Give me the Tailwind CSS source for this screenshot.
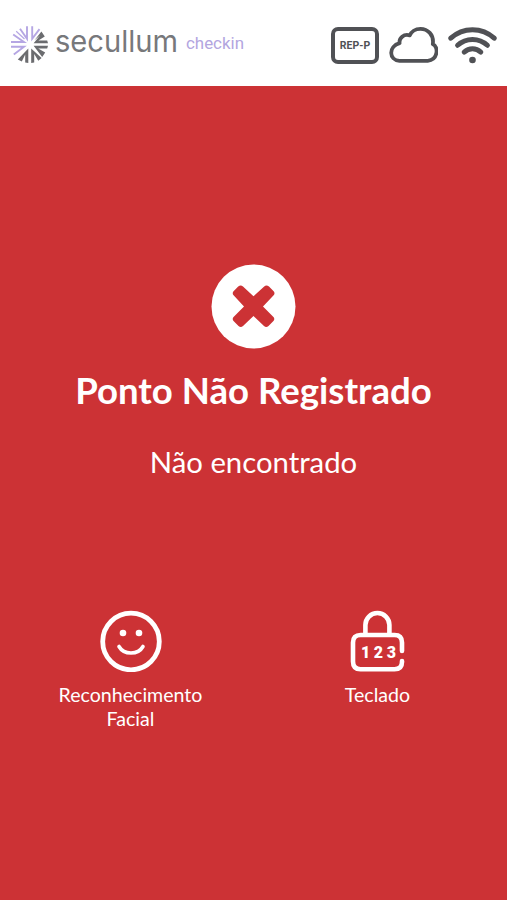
<!DOCTYPE html>
<html lang="pt-BR">
<head>
  <meta charset="UTF-8" />
  <meta name="viewport" content="width=device-width, initial-scale=1.0" />
  <title>Secullum Checkin</title>
  <script src="https://cdn.jsdelivr.net/npm/@tailwindcss/browser@4"></script>
</head>
<body class="h-screen flex flex-col overflow-hidden bg-[#cc3235] text-white font-['Lato',sans-serif]">
  <!-- Cabeçalho -->
  <header class="h-[86px] shrink-0 bg-white flex items-start justify-between pl-[10px] pr-[10px]">
    <div class="flex pt-5">
      <svg class="w-[39px] h-[39px] mt-[5px]" viewBox="0 0 39 39" fill="none" stroke-width="1.9">
        <g stroke="#b5a6e3">
          <path d="M22.2 1.3V13.8L29.5 4.2" />
          <path d="M17 1.3V13.8L10 3.8" />
          <path d="M6.2 6.2L14.5 14" stroke-width="1.2" />
          <path d="M1 17H14L3.2 9.5" />
          <path d="M1 21.8H14L3.8 29.5" />
        </g>
        <g fill="#6b6c6f">
          <path d="M31.4 6.5L34.8 11.4L28.4 15.4H37.2L38 18.2H23.6L30 10.5L24.5 15.2Z" />
          <path d="M23.6 20.8H38L37.2 23.6H28.2L35.2 27.6L32.2 32Z" />
          <path d="M21.2 23.4V38L24.2 37.4V29L28.3 35.8L31.6 33Z" />
          <path d="M18.3 23.4V38L15.2 37.6V29.5L11.8 36.6L7.8 34.4Z" />
        </g>
      </svg>
      <svg class="w-[200px] h-11 overflow-visible" viewBox="0 0 200 44">
        <text x="6" y="32" font-family="Inter" font-size="30" textLength="123" lengthAdjust="spacingAndGlyphs" fill="#77787b">secullum</text>
        <text x="137" y="29" font-family="Roboto" font-size="17" textLength="58" lengthAdjust="spacingAndGlyphs" fill="#b3a5df">checkin</text>
      </svg>
    </div>
    <div class="flex gap-[10px] pt-[26px]">
      <div class="w-12 h-[37px] mt-px border-4 border-[#505155] rounded-[7px] flex items-center justify-center font-[Roboto] font-bold text-[10.5px] text-[#505155]">REP-P</div>
      <svg class="w-[49px] h-[38px]" viewBox="0 0 49 38" fill="none" stroke="#505155" stroke-width="3.8" stroke-linejoin="round">
        <path d="M10.5 34.8H38.7C49.5 33.8 49.5 20 43.8 18.2C45.2 8.5 38.5 2.8 31.5 2.8C26.2 2.8 22.2 5.8 20.8 9.4C14.8 7.4 9.8 12.3 10.6 17.2C-.8 20.5-.3 34 10.5 34.8Z" />
      </svg>
      <svg class="w-[49px] h-[38px]" viewBox="0 0 49 38" fill="none" stroke="#505155" stroke-width="5" stroke-linecap="round">
        <path d="M2.8 12.2C15 .9 34 .9 46.2 12.2" />
        <path d="M9.6 19.3C18 11.4 31 11.4 39.4 19.3" />
        <path d="M16.2 26.1C21 21.7 28 21.7 32.8 26.1" />
        <circle cx="24.5" cy="34" r="3.3" fill="#505155" stroke="none" />
      </svg>
    </div>
  </header>

  <!-- Resultado da marcação -->
  <main class="flex-1 flex flex-col items-center pt-[178px]">
    <svg class="w-[85px] h-[85px]" viewBox="0 0 85 85">
      <circle cx="42.5" cy="42.5" r="42" fill="#fff" />
      <path d="M42.5 32.3L32 22.4Q29.5 20.4 27.2 22.6L22.8 27Q20.6 29.2 22.8 31.5L33 42.4L22.8 52.8Q20.6 55 22.8 57.3L27.5 62Q29.8 64.2 32 62L42.5 52L53 62Q55.2 64.2 57.5 62L62.2 57.3Q64.4 55 62.2 52.8L52 42.4L62.4 31.5Q64.6 29.2 62.4 27L58 22.6Q55.5 20.4 53.2 22.4Z" fill="#cc3235" />
    </svg>
    <h1 class="mt-[17px] h-12 leading-[48px] text-[36.6px] font-bold whitespace-nowrap">Ponto Não Registrado</h1>
    <p class="mt-7 h-10 leading-10 text-[29.3px] whitespace-nowrap">Não encontrado</p>

    <!-- Outras formas de registro -->
    <div class="mt-[128px] w-[494px] ml-px grid grid-cols-2 text-center text-[19.6px] leading-6">
      <div class="flex flex-col items-center">
        <svg class="w-[62px] h-[62px]" viewBox="0 0 62 62" fill="none" stroke="#fff" stroke-linecap="round">
          <circle cx="31" cy="31.5" r="28.3" stroke-width="4.8" />
          <circle cx="23" cy="23" r="3.3" fill="#fff" stroke="none" />
          <circle cx="39" cy="23" r="3.3" fill="#fff" stroke="none" />
          <path d="M19 36.5C24 45.2 38 45.2 43 36.5" stroke-width="3.6" />
        </svg>
        <span class="mt-[11px] w-40">Reconhecimento Facial</span>
      </div>
      <div class="flex flex-col items-center">
        <svg class="w-[56px] h-[62px]" viewBox="0 0 56 62" fill="none" stroke="#fff" stroke-width="4.6" stroke-linecap="round">
          <path d="M15.4 23.5V15A12 12 0 0 1 39.4 15V23.5" />
          <path d="M52 41V32.5Q52 25 44.5 25H10.5Q3 25 3 32.5V51.5Q3 59.2 10.5 59.2H44.5Q52 59.2 52 52V51" />
          <text x="11" y="47.5" font-family="Roboto" font-size="16" font-weight="900" textLength="35" fill="#fff" stroke="none">123</text>
        </svg>
        <span class="mt-[11px]">Teclado</span>
      </div>
    </div>
  </main>
</body>
</html>
